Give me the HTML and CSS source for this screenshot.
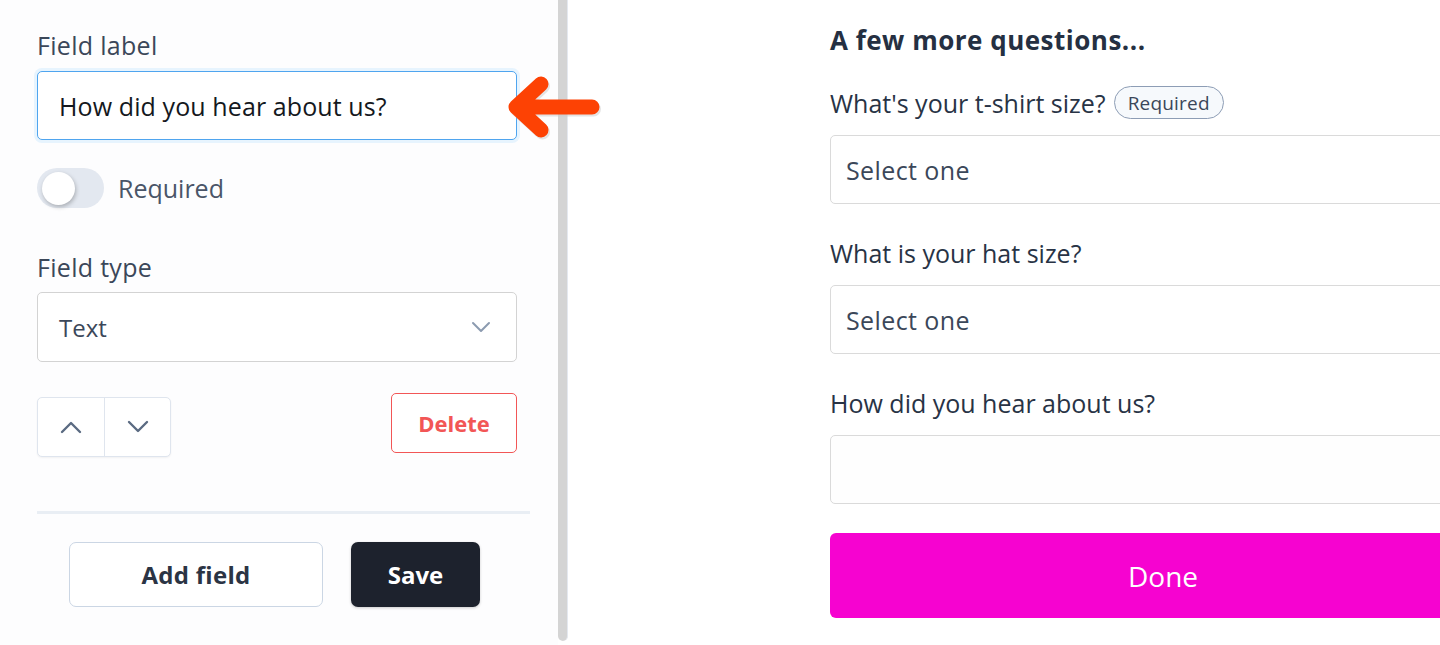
FILE: index.html
```
<!DOCTYPE html>
<html lang="en">

<head>
    <meta charset="UTF-8">
    <title>Form field editor</title>
    <link rel="stylesheet" href="styles.css">
</head>

<body>
    <div class="page">
        <aside class="editor">
            <label class="label" for="fieldLabel">Field label</label>
            <input class="text-input" id="fieldLabel" type="text" value="How did you hear about us?">

            <div class="toggle-row">
                <span class="toggle"><span class="knob"></span></span>
                <span class="toggle-text">Required</span>
            </div>

            <label class="label label-type">Field type</label>
            <div class="select">
                <span>Text</span>
                <svg class="chevron" width="20" height="12" viewBox="0 0 20 12">
                    <polyline points="2,2 10,10 18,2" fill="none" stroke="#8c9bb0" stroke-width="2" stroke-linecap="round" stroke-linejoin="round" />
                </svg>
            </div>

            <div class="actions">
                <div class="move-group">
                    <button class="move-btn">
                        <svg width="22" height="14" viewBox="0 0 22 14">
                            <polyline points="2,12 11,3 20,12" fill="none" stroke="#5b6b82" stroke-width="2.4" stroke-linecap="round" stroke-linejoin="round" />
                        </svg>
                    </button>
                    <button class="move-btn">
                        <svg width="22" height="14" viewBox="0 0 22 14">
                            <polyline points="2,2 11,11 20,2" fill="none" stroke="#5b6b82" stroke-width="2.4" stroke-linecap="round" stroke-linejoin="round" />
                        </svg>
                    </button>
                </div>
                <button class="delete-btn">Delete</button>
            </div>

            <div class="divider"></div>

            <div class="footer">
                <button class="add-btn">Add field</button>
                <button class="save-btn">Save</button>
            </div>
        </aside>

        <div class="scrollbar"></div>

        <main class="preview">
            <h2>A few more questions...</h2>

            <div class="question">
                <div class="q-label">What's your t-shirt size? <span class="pill">Required</span></div>
                <div class="q-box">Select one</div>
            </div>

            <div class="question">
                <div class="q-label">What is your hat size?</div>
                <div class="q-box">Select one</div>
            </div>

            <div class="question">
                <div class="q-label">How did you hear about us?</div>
                <div class="q-box q-empty"></div>
            </div>

            <button class="done-btn">Done</button>
        </main>

        <!-- callout arrow pointing at the label input -->
        <svg class="callout" width="1440" height="645" viewBox="0 0 1440 645">
            <path d="M541 84 L516 107 L541 130 M516 107 L592 107" fill="none" stroke="#c9c9c9" stroke-opacity="0.5" stroke-width="15" stroke-linecap="round" stroke-linejoin="round" transform="translate(1.5 2)" />
            <path d="M541 84 L516 107 L541 130 M516 107 L592 107" fill="none" stroke="#fd4204" stroke-width="15" stroke-linecap="round" stroke-linejoin="round" />
        </svg>
    </div>
</body>

</html>
```

FILE: styles.css
```
* {
    margin: 0;
    padding: 0;
    box-sizing: border-box;
}

html,
body {
    height: 100%;
    background: #ffffff;
    font-family: 'Open Sans', 'Liberation Sans', sans-serif;
    color: #2f3a4b;
}

.page {
    position: relative;
    display: flex;
    height: 645px;
    overflow: hidden;
}

/* left editor panel */
.editor {
    width: 558px;
    flex-shrink: 0;
    padding: 31px 41px 0 37px;
    background: #fdfdfe;
    display: flex;
    flex-direction: column;
}

.label {
    display: block;
    font-size: 25px;
    line-height: 28px;
    letter-spacing: 0.3px;
    color: #3b4759;
}

.text-input {
    margin-top: 12px;
    width: 480px;
    height: 69px;
    padding: 0 21px;
    border: 1px solid #4fa5ef;
    border-radius: 5px;
    box-shadow: 0 0 0 3px #e7f4fe;
    font-family: inherit;
    font-size: 25px;
    letter-spacing: 0.1px;
    color: #141820;
    background: #ffffff;
    outline: none;
}

.toggle-row {
    margin-top: 28px;
    display: flex;
    align-items: center;
    gap: 14px;
    height: 40px;
}

.toggle {
    width: 67px;
    height: 40px;
    border-radius: 20px;
    background: #e3e8f0;
    display: flex;
    align-items: center;
    padding-left: 5px;
}

.knob {
    width: 33px;
    height: 33px;
    border-radius: 50%;
    background: #ffffff;
    box-shadow: 1px 2px 4px rgba(0, 0, 0, 0.25);
}

.toggle-text {
    font-size: 25px;
    color: #4a5568;
}

.label-type {
    margin-top: 45px;
}

.select {
    margin-top: 11px;
    width: 480px;
    height: 70px;
    border: 1px solid #d3d3d3;
    border-radius: 5px;
    background: #ffffff;
    display: flex;
    align-items: center;
    justify-content: space-between;
    padding: 0 25px 0 21px;
    font-size: 24px;
    color: #3b4759;
}

.actions {
    margin-top: 31px;
    width: 480px;
    display: flex;
    justify-content: space-between;
    align-items: flex-start;
}

.move-group {
    margin-top: 4px;
    display: flex;
    border: 1px solid #dfe5ee;
    border-radius: 5px;
    background: #ffffff;
    box-shadow: 0 1px 2px rgba(0, 0, 0, 0.05);
}

.move-btn {
    width: 66px;
    height: 58px;
    border: none;
    background: transparent;
    display: flex;
    align-items: center;
    justify-content: center;
}

.move-btn + .move-btn {
    border-left: 1px solid #dfe5ee;
}

.delete-btn {
    width: 126px;
    height: 60px;
    border: 1px solid #f25656;
    border-radius: 5px;
    background: #ffffff;
    font-family: inherit;
    font-size: 22px;
    font-weight: 700;
    color: #f25656;
}

.divider {
    margin-top: 54px;
    width: 493px;
    height: 3px;
    background: #e9eef4;
}

.footer {
    margin-top: 28px;
    padding-left: 32px;
    display: flex;
    gap: 28px;
}

.add-btn {
    width: 254px;
    height: 65px;
    border: 1.5px solid #cbd6e4;
    border-radius: 7px;
    background: #ffffff;
    font-family: inherit;
    font-size: 24px;
    font-weight: 700;
    letter-spacing: 0.3px;
    color: #2b3444;
}

.save-btn {
    width: 129px;
    height: 65px;
    border: none;
    border-radius: 7px;
    background: #1d222d;
    font-family: inherit;
    font-size: 24px;
    font-weight: 700;
    color: #ffffff;
    box-shadow: 0 1px 3px rgba(0, 0, 0, 0.2);
}

.scrollbar {
    width: 10px;
    flex-shrink: 0;
    height: 641px;
    background: #d4d4d4;
    border-right: 1px solid #e4e8ef;
    border-radius: 0 0 5px 5px;
}

/* right preview panel */
.preview {
    flex: 1;
    padding: 24px 0 0 262px;
    min-width: 0;
}

.preview h2 {
    font-size: 26px;
    line-height: 32px;
    font-weight: 700;
    letter-spacing: 0.5px;
    color: #253042;
}

.question {
    width: 666px;
    margin-top: 30px;
}

.question + .question {
    margin-top: 32px;
}

.q-label {
    height: 33px;
    display: flex;
    align-items: center;
    gap: 8px;
    font-size: 25px;
    color: #283345;
}

.pill {
    height: 33px;
    padding: 0 13px;
    border: 1.5px solid #8d9db5;
    border-radius: 17px;
    background: #f6f9fc;
    display: flex;
    align-items: center;
    font-size: 19px;
    letter-spacing: 0.2px;
    color: #3b4759;
}

.q-box {
    margin-top: 16px;
    height: 69px;
    border: 1.5px solid #dadada;
    border-radius: 5px;
    display: flex;
    align-items: center;
    padding-left: 15px;
    font-size: 25px;
    letter-spacing: 0.4px;
    color: #3b4759;
}

.q-empty {
    background: #fefefe;
}

.done-btn {
    margin-top: 29px;
    width: 666px;
    height: 85px;
    border: none;
    border-radius: 6px;
    background: #f603d0;
    font-family: inherit;
    font-size: 28px;
    color: #ffffff;
}

.callout {
    position: absolute;
    left: 0;
    top: 0;
    pointer-events: none;
}
```
